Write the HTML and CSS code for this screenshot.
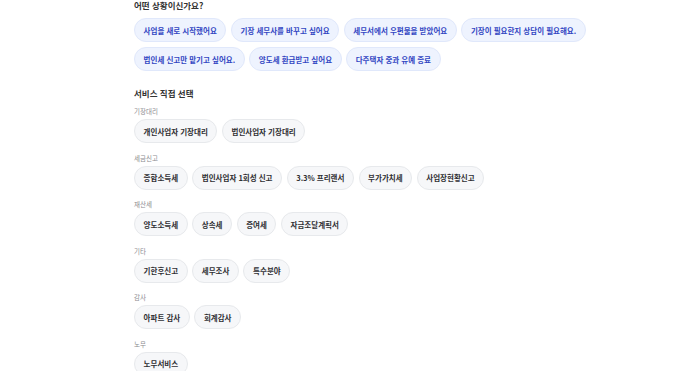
FILE: index.html
```html
<!DOCTYPE html>
<html lang="ko">

<head>
    <meta charset="UTF-8">
    <meta name="viewport" content="width=device-width, initial-scale=1.0">
    <title>상담 신청</title>
    <link rel="stylesheet" href="styles.css">
</head>

<body>
    <main class="wrap">
        <section class="situation">
            <h2 class="question">어떤 상황이신가요?</h2>
            <div class="chips">
                <button class="chip chip-blue">사업을 새로 시작했어요</button>
                <button class="chip chip-blue">기장 세무사를 바꾸고 싶어요</button>
                <button class="chip chip-blue">세무서에서 우편물을 받았어요</button>
                <button class="chip chip-blue">기장이 필요한지 상담이 필요해요.</button>
                <button class="chip chip-blue">법인세 신고만 맡기고 싶어요.</button>
                <button class="chip chip-blue">양도세 환급받고 싶어요</button>
                <button class="chip chip-blue">다주택자 중과 유예 종료</button>
            </div>
        </section>

        <section class="services">
            <h2 class="title">서비스 직접 선택</h2>

            <div class="group">
                <p class="group-label">기장대리</p>
                <div class="chips">
                    <button class="chip">개인사업자 기장대리</button>
                    <button class="chip">법인사업자 기장대리</button>
                </div>
            </div>

            <div class="group">
                <p class="group-label">세금신고</p>
                <div class="chips">
                    <button class="chip">종합소득세</button>
                    <button class="chip">법인사업자 1회성 신고</button>
                    <button class="chip">3.3% 프리랜서</button>
                    <button class="chip">부가가치세</button>
                    <button class="chip">사업장현황신고</button>
                </div>
            </div>

            <div class="group">
                <p class="group-label">재산세</p>
                <div class="chips">
                    <button class="chip">양도소득세</button>
                    <button class="chip">상속세</button>
                    <button class="chip">증여세</button>
                    <button class="chip">자금조달계획서</button>
                </div>
            </div>

            <div class="group">
                <p class="group-label">기타</p>
                <div class="chips">
                    <button class="chip">기한후신고</button>
                    <button class="chip">세무조사</button>
                    <button class="chip">특수분야</button>
                </div>
            </div>

            <div class="group">
                <p class="group-label">감사</p>
                <div class="chips">
                    <button class="chip">아파트 감사</button>
                    <button class="chip">회계감사</button>
                </div>
            </div>

            <div class="group">
                <p class="group-label">노무</p>
                <div class="chips">
                    <button class="chip">노무서비스</button>
                </div>
            </div>
        </section>
    </main>
</body>

</html>
```

FILE: styles.css
```css
body {
    font-family: "Noto Sans CJK KR", "Noto Sans", sans-serif;
    margin: 0;
    padding: 0;
    background-color: #fff;
    color: #333;
}

.wrap {
    padding: 0 20px 0 134px;
    max-width: 560px;
}

.question,
.title {
    font-size: 8.5px;
    line-height: 12px;
    font-weight: 600;
    color: #333;
    margin: 0 0 7px;
}

.question {
    line-height: 10px;
    margin-bottom: 8px;
}

.chips {
    display: flex;
    flex-wrap: wrap;
    gap: 5px 4.5px;
}

.chip {
    font-family: inherit;
    display: inline-flex;
    align-items: center;
    height: 24px;
    padding: 0 8.6px;
    font-size: 7.5px;
    font-weight: 600;
    color: #2f2f33;
    background-color: #f6f7f9;
    border: 1px solid #e7e9ec;
    border-radius: 12px;
    cursor: pointer;
}

.chip-blue {
    color: #3246c2;
    background-color: #eef3fe;
    border-color: #e0e8fb;
}

.services {
    margin-top: 16px;
}

.group {
    margin-bottom: 9.6px;
}

.group-label {
    font-size: 6.5px;
    line-height: 10px;
    color: #8b8b8f;
    margin: 0 0 3px;
}
```
